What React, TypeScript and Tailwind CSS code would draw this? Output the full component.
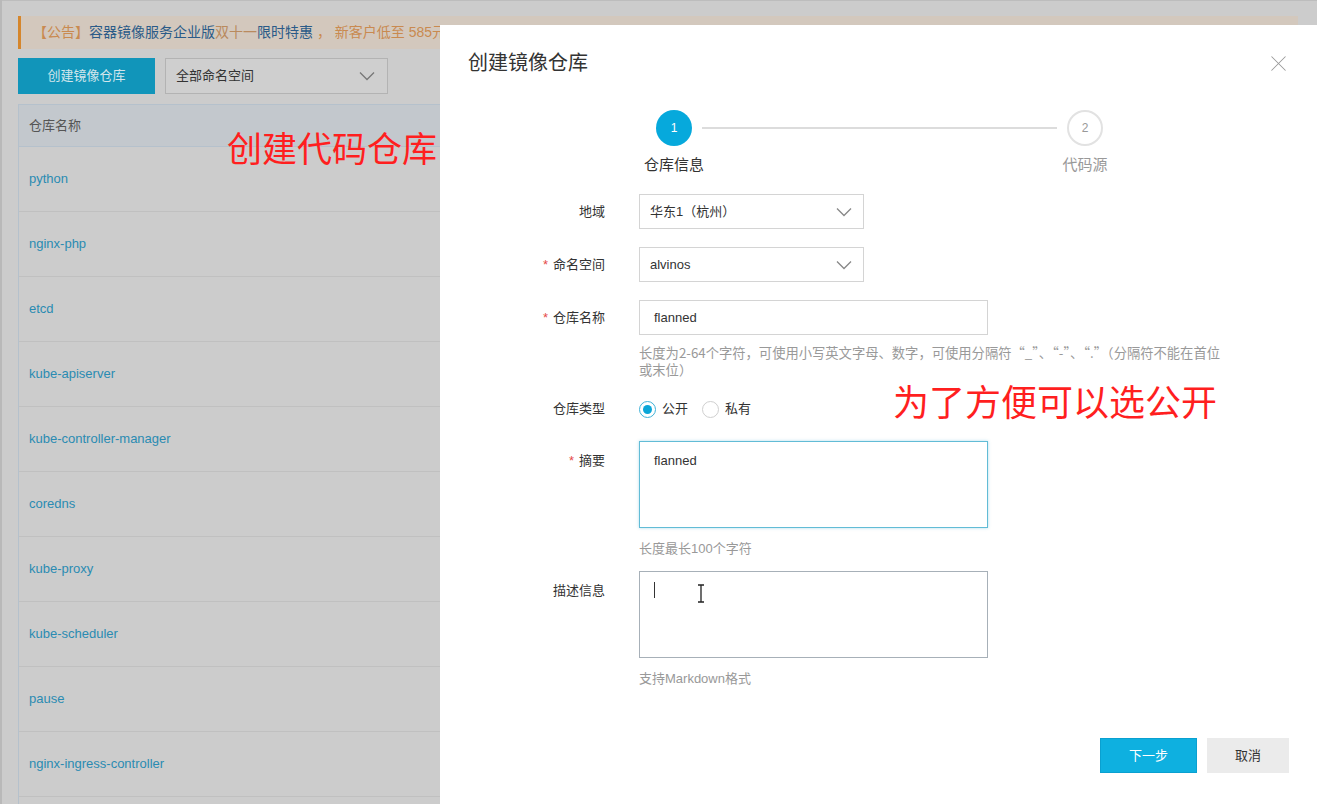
import { X } from 'lucide-react'

const repos = [
  'python',
  'nginx-php',
  'etcd',
  'kube-apiserver',
  'kube-controller-manager',
  'coredns',
  'kube-proxy',
  'kube-scheduler',
  'pause',
  'nginx-ingress-controller',
  '',
]

function Chevron({ color = '#888' }: { color?: string }) {
  return (
    <svg width="16" height="10" viewBox="0 0 16 10" fill="none">
      <polyline points="1,1.5 8,8.5 15,1.5" stroke={color} strokeWidth="1.3" />
    </svg>
  )
}

function Label({ text, required, top }: { text: string; required?: boolean; top?: boolean }) {
  return (
    <div className={`flex w-[165px] shrink-0 justify-end text-[13px] text-[#333] ${top ? 'items-start pt-[10px]' : 'items-center'}`}>
      {required && <span className="mr-[5px] text-[#e64a4a]">*</span>}
      <span>{text}</span>
    </div>
  )
}

function Background() {
  return (
    <div className="flex h-full flex-col border-l-2 border-[#b9b9b9] bg-[#cccccc]">
      <div className="h-[3px] border-b border-[#bdbdbd] bg-[#d6d6d6]" />
      <div className="flex flex-col pl-[16px] pt-[15px]">
        {/* notice */}
        <div className="flex h-[33px] w-[1280px] items-center border-l-[3px] border-[#d5862c] bg-[#d3c8bd] pl-[12px] text-[14px] whitespace-pre">
          <span className="text-[#c98a50]">【公告】</span>
          <span className="text-[#2b5b88]">容器镜像服务企业版</span>
          <span className="text-[#b98a5e]">双十一</span>
          <span className="text-[#2b5b88]">限时特惠</span>
          <span className="text-[#c98a50]"> ， 新客户低至 585元/月</span>
        </div>
        <div className="mt-[9px] flex gap-[10px]">
          <div className="flex h-[36px] w-[137px] items-center justify-center bg-[#1195ba] text-[13px] text-[#d3e6ec]">
            创建镜像仓库
          </div>
          <div className="flex h-[36px] w-[223px] items-center justify-between border border-[#b3b3b3] bg-[#cfcfcf] pl-[10px] pr-[12px] text-[13px] text-[#333]">
            <span>全部命名空间</span>
            <Chevron color="#777" />
          </div>
        </div>
        {/* table */}
        <div className="mt-[10px] w-[1290px] border-l border-t border-[#b5c1cc]">
          <div className="flex h-[42px] items-center border-b border-[#b5c1cc] bg-[#c3c8cd] pl-[10px] text-[13px] text-[#555]">
            仓库名称
          </div>
          {repos.map((r, i) => (
            <div key={i} className="flex h-[65px] items-center border-b border-[#c0c0c0] pl-[10px] text-[13px] text-[#2a8bb2]">
              {r}
            </div>
          ))}
        </div>
      </div>
    </div>
  )
}

function Steps() {
  return (
    <div className="ml-[216px] mt-[35px] flex w-[447px] items-start">
      <div className="flex w-[36px] flex-col items-center">
        <div className="flex h-[36px] w-[36px] items-center justify-center rounded-full bg-[#06a9dc] text-[12px] text-white">1</div>
        <div className="mt-[9px] whitespace-nowrap text-[15px] leading-[20px] text-[#333]">仓库信息</div>
      </div>
      <div className="mx-[10px] mt-[17px] h-[2px] flex-1 bg-[#dcdcdc]" />
      <div className="flex w-[36px] flex-col items-center">
        <div className="flex h-[36px] w-[36px] items-center justify-center rounded-full border-2 border-[#e2e2e2] text-[12px] text-[#999]">2</div>
        <div className="mt-[9px] whitespace-nowrap text-[15px] leading-[20px] text-[#999]">代码源</div>
      </div>
    </div>
  )
}

function Modal() {
  return (
    <div className="absolute left-[440px] top-[25px] flex h-[779px] w-[877px] flex-col bg-white">
      <div className="mt-[26px] flex h-[24px] items-center justify-between pl-[28px] pr-[25px]">
        <div className="text-[20px] leading-[24px] text-[#333]">创建镜像仓库</div>
        <X size={27} strokeWidth={0.9} color="#999" />
      </div>
      <Steps />

      <div className="mt-[19px] flex flex-col">
        <div className="flex">
          <Label text="地域" />
          <div className="ml-[34px] flex h-[35px] w-[225px] items-center justify-between border border-[#d4d4d4] pl-[10px] pr-[11px] text-[13px] text-[#333]">
            <span>华东1（杭州）</span>
            <Chevron />
          </div>
        </div>
        <div className="mt-[18px] flex">
          <Label text="命名空间" required />
          <div className="ml-[34px] flex h-[35px] w-[225px] items-center justify-between border border-[#d4d4d4] pl-[10px] pr-[11px] text-[13px] text-[#333]">
            <span>alvinos</span>
            <Chevron />
          </div>
        </div>
        <div className="mt-[18px] flex">
          <Label text="仓库名称" required />
          <div className="ml-[34px] flex h-[35px] w-[349px] items-center border border-[#d4d4d4] pl-[14px] text-[13px] text-[#333]">
            flanned
          </div>
        </div>
        <div className="ml-[199px] mt-[9px] whitespace-nowrap font-['Noto_Sans_CJK_SC',sans-serif] text-[13.3px] leading-[17px] text-[#999]">
          长度为2-64个字符，可使用小写英文字母、数字，可使用分隔符“_”、“-”、“.”（分隔符不能在首位
          <br />
          或末位）
        </div>

        <div className="mt-[21px] flex h-[20px]">
          <Label text="仓库类型" />
          <div className="ml-[34px] flex items-center text-[13px] text-[#333]">
            <span className="flex h-[17px] w-[17px] items-center justify-center rounded-full border border-[#3fb2d8]">
              <span className="h-[9px] w-[9px] rounded-full bg-[#0aa6d8]" />
            </span>
            <span className="ml-[6px]">公开</span>
            <span className="ml-[14px] h-[17px] w-[17px] rounded-full border border-[#cfcfcf]" />
            <span className="ml-[6px]">私有</span>
          </div>
        </div>

        <div className="mt-[22px] flex">
          <Label text="摘要" required top />
          <div className="ml-[34px] h-[87px] w-[349px] border-[1.5px] border-[#62bcd6] pl-[14px] pt-[9px] text-[13px] text-[#333] shadow-[0_0_3px_rgba(60,170,210,0.4)]">
            flanned
          </div>
        </div>
        <div className="ml-[199px] mt-[12px] text-[13px] leading-[17px] text-[#999]">长度最长100个字符</div>

        <div className="mt-[14px] flex">
          <Label text="描述信息" top />
          <div className="ml-[34px] flex h-[87px] w-[349px] items-start border-[1.5px] border-[#a7b0b8] pl-[14px] pt-[10px]">
            <span className="h-[16px] w-px bg-[#333]" />
            <svg className="ml-[42px] mt-[2px]" width="8" height="19" viewBox="0 0 8 19" fill="none">
              <path d="M1 1h6M4 1v17M1 18h6" stroke="#222" strokeWidth="1.3" />
            </svg>
          </div>
        </div>
        <div className="ml-[199px] mt-[12px] text-[13px] leading-[17px] text-[#999]">支持Markdown格式</div>

        <div className="mr-[28px] mt-[51px] flex justify-end gap-[10px]">
          <div className="flex h-[35px] w-[97px] items-center justify-center border border-[#0aa0d0] bg-[#0eb0e0] text-[13px] text-white">
            下一步
          </div>
          <div className="flex h-[35px] w-[82px] items-center justify-center bg-[#ebebeb] text-[13px] text-[#333]">取消</div>
        </div>
      </div>
    </div>
  )
}

export default function App() {
  return (
    <div className="relative h-[804px] w-[1317px] overflow-hidden font-['Liberation_Sans','Noto_Sans_CJK_SC',sans-serif]">
      <Background />
      <Modal />
      <div className="absolute left-[227px] top-[132px] text-[35px] leading-none text-[#ff1f1f]">创建代码仓库</div>
      <div className="absolute left-[893px] top-[386px] text-[36px] leading-none text-[#ff1f1f]">为了方便可以选公开</div>
    </div>
  )
}
